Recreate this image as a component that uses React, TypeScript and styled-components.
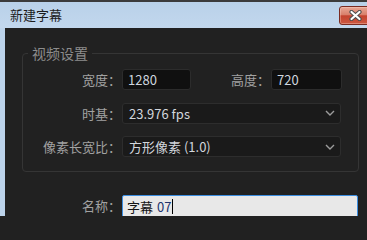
import styled, { createGlobalStyle } from "styled-components";

const GlobalStyle = createGlobalStyle`
  html, body, #root {
    margin: 0;
    padding: 0;
    width: 367px;
    height: 216px;
    overflow: hidden;
    background: #212121;
  }
  body {
    font-family: "Noto Sans CJK SC", "Noto Sans", sans-serif;
  }
  * { box-sizing: border-box; }
`;

const Window = styled.div`
  display: flex;
  flex-direction: column;
  width: 367px;
  height: 216px;
  overflow: hidden;
  background: #212121;
  border-top: 2px solid #3b3b3b;
`;

const TitleBar = styled.div`
  display: flex;
  align-items: flex-start;
  justify-content: space-between;
  flex-shrink: 0;
  height: 26px;
  padding-left: 10px;
  background: linear-gradient(#b9d1e9, #c2d7ed);
`;

const Title = styled.span`
  font-size: 13px;
  line-height: 26px;
  color: #1c1c1c;
`;

const CloseButton = styled.button`
  display: flex;
  align-items: center;
  justify-content: center;
  flex-shrink: 0;
  width: 32px;
  height: 19px;
  margin: 4px -4px 0 0;
  padding: 0;
  border: 1px solid #7a2b21;
  border-radius: 3px;
  background: linear-gradient(#e8a795 0%, #d9806c 45%, #c4432f 52%, #cc5840 100%);
  box-shadow: inset 0 0 0 1px rgba(255, 220, 210, 0.35);
`;

const Frame = styled.div`
  display: flex;
  flex: 1;
  min-height: 0;
  border-left: 5px solid #bcd3ea;
  background: #212121;
`;

const Content = styled.div`
  flex: 1;
  padding: 16px 8px 0 17px;
`;

const Group = styled.fieldset`
  margin: 0;
  padding: 7px 0 14px 0;
  min-width: 0;
  border: 1px solid #353535;
  border-radius: 4px;
`;

const GroupTitle = styled.legend`
  margin-left: 5px;
  padding: 0 4px;
  font-size: 14px;
  line-height: 18px;
  color: #8d8d8d;
`;

const Rows = styled.div`
  display: flex;
  flex-direction: column;
  gap: 12.5px;
`;

const Row = styled.div`
  display: flex;
  align-items: center;
  height: 21px;
`;

const Label = styled.span<{ $width: number; $gap?: number }>`
  flex-shrink: 0;
  width: ${({ $width }) => $width}px;
  margin-left: ${({ $gap }) => $gap ?? 0}px;
  margin-right: 1px;
  text-align: right;
  font-size: 13px;
  color: #a2a2a2;
  white-space: nowrap;
`;

const TextInput = styled.div<{ $width: number }>`
  display: flex;
  align-items: center;
  width: ${({ $width }) => $width}px;
  height: 21px;
  padding-left: 5px;
  background: #101010;
  border: 1px solid #2c2c2c;
  border-radius: 3px;
  font-size: 13px;
  color: #cfd6df;
`;

const Select = styled.div`
  display: flex;
  align-items: center;
  justify-content: space-between;
  width: 219px;
  height: 21px;
  padding: 0 5px 0 6px;
  background: #1a1a1a;
  border: 1px solid #2d2d2d;
  border-radius: 3px;
  font-size: 13px;
  color: #d2d6dc;
`;

const NameRow = styled.div`
  display: flex;
  align-items: flex-start;
  margin-top: 23px;
  padding-left: 1px;
`;

const NameLabel = styled(Label)`
  line-height: 22px;
`;

const NameInput = styled.div`
  display: flex;
  align-items: center;
  width: 236px;
  height: 23px;
  padding-left: 4px;
  background: #e8e8e8;
  border: 1px solid #3b8de0;
  border-radius: 2px;
  font-size: 13px;
  color: #141414;
`;

const Digits = styled.span`
  margin-left: 4px;
  color: #20346e;
`;

const Caret = styled.span`
  display: inline-block;
  width: 1px;
  height: 15px;
  margin-left: 1px;
  background: #000;
`;

const Chevron = () => (
  <svg width="10" height="6" viewBox="0 0 10 6">
    <polyline
      points="1,1 5,5 9,1"
      fill="none"
      stroke="#9c9c9c"
      strokeWidth="1.4"
    />
  </svg>
);

const CloseIcon = () => (
  <svg width="13" height="11" viewBox="0 0 13 11">
    <path
      d="M2.5 2 L10.5 9 M10.5 2 L2.5 9"
      stroke="#4d4d4d"
      strokeWidth="4.2"
      strokeLinecap="round"
    />
    <path
      d="M2.5 2 L10.5 9 M10.5 2 L2.5 9"
      stroke="#ffffff"
      strokeWidth="2.2"
      strokeLinecap="round"
    />
  </svg>
);

export default function App() {
  return (
    <>
      <GlobalStyle />
      <Window>
        <TitleBar>
          <Title>新建字幕</Title>
          <CloseButton aria-label="关闭">
            <CloseIcon />
          </CloseButton>
        </TitleBar>
        <Frame>
          <Content>
            <Group>
              <GroupTitle>视频设置</GroupTitle>
              <Rows>
                <Row>
                  <Label $width={98}>宽度：</Label>
                  <TextInput $width={69}>1280</TextInput>
                  <Label $width={39} $gap={40}>
                    高度：
                  </Label>
                  <TextInput $width={71}>720</TextInput>
                </Row>
                <Row>
                  <Label $width={98}>时基：</Label>
                  <Select>
                    23.976 fps
                    <Chevron />
                  </Select>
                </Row>
                <Row>
                  <Label $width={98}>像素长宽比：</Label>
                  <Select>
                    方形像素 (1.0)
                    <Chevron />
                  </Select>
                </Row>
              </Rows>
            </Group>
            <NameRow>
              <NameLabel $width={98}>名称：</NameLabel>
              <NameInput>
                字幕<Digits>07</Digits>
                <Caret />
              </NameInput>
            </NameRow>
          </Content>
        </Frame>
      </Window>
    </>
  );
}
